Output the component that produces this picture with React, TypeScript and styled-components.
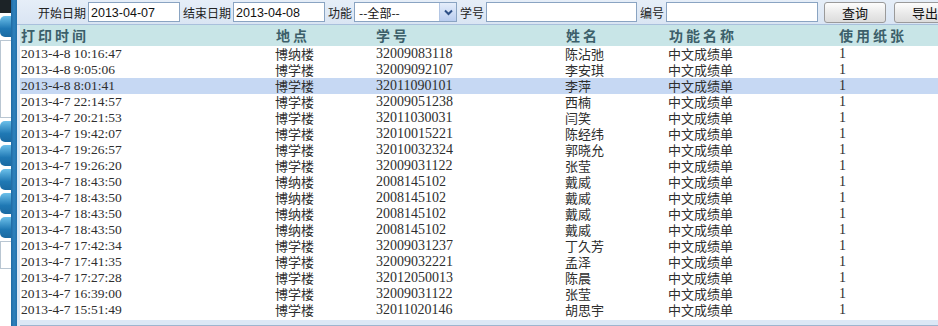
import React from 'react';
import styled, {createGlobalStyle} from 'styled-components';

const GlobalStyle = createGlobalStyle`
  html, body {margin: 0; padding: 0; background: #eef2f7;}
  body {font-family: "Noto Sans CJK SC", "Liberation Sans", sans-serif;}
`;

const rows = [
    ['2013-4-8 10:16:47', '博纳楼', '32009083118', '陈沾弛'],
    ['2013-4-8 9:05:06', '博学楼', '32009092107', '李安琪'],
    ['2013-4-8 8:01:41', '博学楼', '32011090101', '李萍'],
    ['2013-4-7 22:14:57', '博学楼', '32009051238', '西楠'],
    ['2013-4-7 20:21:53', '博学楼', '32011030031', '闫笑'],
    ['2013-4-7 19:42:07', '博学楼', '32010015221', '陈经纬'],
    ['2013-4-7 19:26:57', '博学楼', '32010032324', '郭晓允'],
    ['2013-4-7 19:26:20', '博学楼', '32009031122', '张莹'],
    ['2013-4-7 18:43:50', '博纳楼', '2008145102', '戴威'],
    ['2013-4-7 18:43:50', '博纳楼', '2008145102', '戴威'],
    ['2013-4-7 18:43:50', '博纳楼', '2008145102', '戴威'],
    ['2013-4-7 18:43:50', '博纳楼', '2008145102', '戴威'],
    ['2013-4-7 17:42:34', '博学楼', '32009031237', '丁久芳'],
    ['2013-4-7 17:41:35', '博学楼', '32009032221', '孟泽'],
    ['2013-4-7 17:27:28', '博学楼', '32012050013', '陈晨'],
    ['2013-4-7 16:39:00', '博学楼', '32009031122', '张莹'],
    ['2013-4-7 15:51:49', '博学楼', '32011020146', '胡思宇'],
];

const App = () => {
    return (
        <Page>
            <GlobalStyle/>
            <Sidebar>
                <SideCap/>
                <SideTab/>
                <SidePanel size={76}/>
                <SideTab/>
                <SideTab/>
                <SideTab/>
                <SideTab/>
                <SideTab/>
                <SidePanel size={26}/>
            </Sidebar>
            <Divider/>
            <Main>
                <Toolbar>
                    <Label>开始日期</Label>
                    <Input width={92} defaultValue={'2013-04-07'}/>
                    <Label>结束日期</Label>
                    <Input width={92} defaultValue={'2013-04-08'}/>
                    <Label>功能</Label>
                    <Select>
                        <span>--全部--</span>
                        <SelectArrow>
                            <svg width="9" height="7" viewBox="0 0 9 7">
                                <path d="M1 1.5 L4.5 5 L8 1.5" fill="none" stroke="#2d4f86" strokeWidth="2"/>
                            </svg>
                        </SelectArrow>
                    </Select>
                    <Label>学号</Label>
                    <Input width={151}/>
                    <Label>编号</Label>
                    <Input width={152}/>
                    <Button>查询</Button>
                    <Button>导出</Button>
                </Toolbar>
                <Frame>
                    <Grid>
                        <HeaderRow>
                            <HeadCell>打印时间</HeadCell>
                            <HeadCell>地点</HeadCell>
                            <HeadCell>学号</HeadCell>
                            <HeadCell>姓名</HeadCell>
                            <HeadCell>功能名称</HeadCell>
                            <HeadCell>使用纸张</HeadCell>
                        </HeaderRow>
                        {rows.map((r, i) => (
                            <Row key={i} selected={i === 2}>
                                <Num size={13.5}>{r[0]}</Num>
                                <Text>{r[1]}</Text>
                                <Num size={14}>{r[2]}</Num>
                                <Text>{r[3]}</Text>
                                <Text>中文成绩单</Text>
                                <Num size={14}>1</Num>
                            </Row>
                        ))}
                    </Grid>
                    <FrameFoot/>
                </Frame>
            </Main>
        </Page>
    );
};

const Page = styled.div`
display: flex;
width: 938px;
height: 326px;
overflow: hidden;
`;

const Sidebar = styled.div`
width: 11px;
display: flex;
flex-direction: column;
gap: 3px;
background: #fff;
flex-shrink: 0;
`;

const SideCap = styled.div`
height: 13px;
background: #1c2327;
`;

const SideTab = styled.div`
height: 21px;
border-radius: 5px 0 0 5px;
background: linear-gradient(#6cc0ea, #1f78b4 60%, #1a6aa2);
`;

const SidePanel = styled.div<{size: number}>`
height: ${p => p.size}px;
border: 1px solid #b9c6d2;
border-right: none;
background: #fff;
`;

const Divider = styled.div`
width: 6px;
flex-shrink: 0;
background: linear-gradient(90deg, #1f6aa3, #2f82bd 50%, #2471aa);
`;

const Main = styled.div`
flex: 1;
display: flex;
flex-direction: column;
min-width: 0;
`;

const Toolbar = styled.div`
height: 24px;
display: flex;
align-items: center;
padding-left: 21px;
background: linear-gradient(#e6eef8, #dae5f3);
border-bottom: 1px solid #a9c0dc;
white-space: nowrap;
overflow: hidden;
& > * {flex-shrink: 0;}
`;

const Label = styled.span`
font-size: 12px;
color: #222;
margin: 0 2px 0 3px;
&:first-child {margin-left: 0;}
`;

const Input = styled.input<{width: number}>`
box-sizing: border-box;
width: ${p => p.width}px;
height: 20px;
border: 1px solid #8aa4c2;
padding: 1px 2px 0;
font: 12.5px "Liberation Sans", sans-serif;
color: #111;
background: #fff;
outline: none;
`;

const Select = styled.div`
box-sizing: border-box;
width: 103px;
height: 20px;
display: flex;
align-items: center;
justify-content: space-between;
border: 1px solid #8aa4c2;
background: #fff;
padding-left: 4px;
font-size: 12px;
color: #111;
`;

const SelectArrow = styled.div`
width: 16px;
height: 18px;
display: flex;
align-items: center;
justify-content: center;
background: linear-gradient(#e5eefb, #b9cdef);
border-left: 1px solid #b3c6e4;
`;

const Button = styled.button`
box-sizing: border-box;
width: 62px;
height: 21px;
margin-left: 6px;
padding: 0;
border: 1px solid #9a9a9a;
border-radius: 3px;
background: linear-gradient(#fdfdfd, #ebebeb 50%, #dcdcdc);
font: 13px "Noto Sans CJK SC", sans-serif;
color: #111;
& + & {margin-left: 8px;}
`;

const Frame = styled.div`
flex: 1;
display: flex;
flex-direction: column;
border-left: 3px solid #dce8f6;
background: #fff;
`;

const Grid = styled.div`
display: grid;
grid-template-columns: 255px 100px 190px 103px 170px 1fr;
`;

const HeaderRow = styled.div`
display: contents;
& > * {
    height: 21px;
    background: #c8e5e7;
}
`;

const HeadCell = styled.div`
padding-left: 1px;
font: bold 14px "Noto Sans CJK SC", sans-serif;
letter-spacing: 3px;
line-height: 21px;
color: #3c5f6a;
`;

const Row = styled.div<{selected?: boolean}>`
display: contents;
& > * {
    height: 16px;
    line-height: 16px;
    background: ${p => p.selected ? '#c6d8f3' : '#fff'};
    color: #2e2e2e;
    white-space: nowrap;
}
`;

const Num = styled.div<{size: number}>`
padding-left: 1px;
font-family: "Liberation Serif", serif;
font-size: ${p => p.size}px;
`;

const Text = styled.div`
font-family: "Noto Sans CJK SC", sans-serif;
font-size: 13px;
`;

const FrameFoot = styled.div`
margin-top: auto;
height: 5px;
background: #dce8f6;
border-bottom: 1px solid #9eb5cf;
`;

export default App;
